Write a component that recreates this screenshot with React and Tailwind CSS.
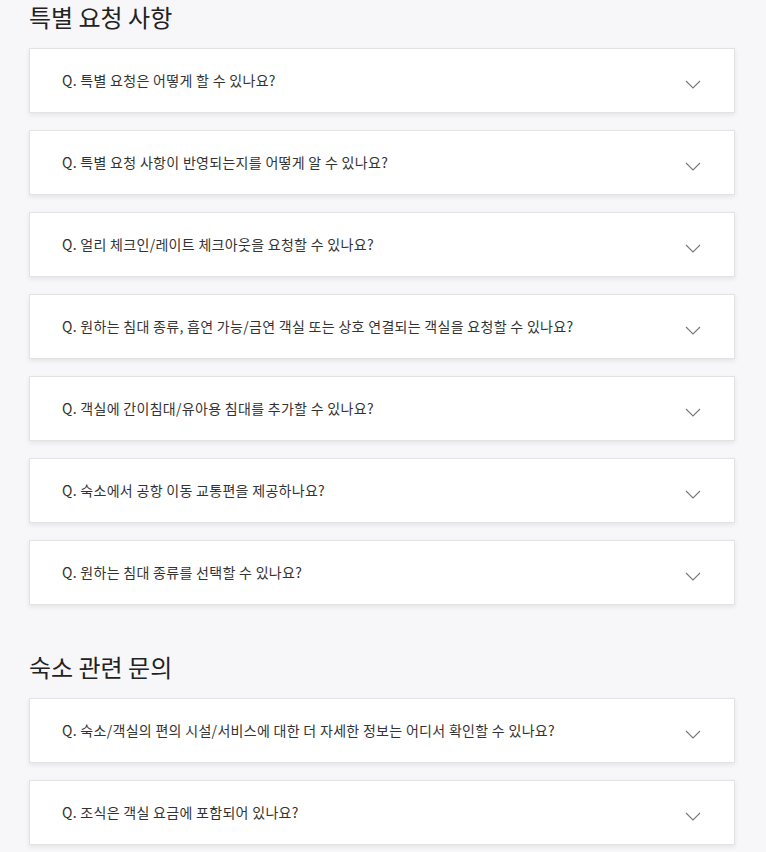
const SECTIONS = [
  {
    title: "특별 요청 사항",
    items: [
      "Q. 특별 요청은 어떻게 할 수 있나요?",
      "Q. 특별 요청 사항이 반영되는지를 어떻게 알 수 있나요?",
      "Q. 얼리 체크인/레이트 체크아웃을 요청할 수 있나요?",
      "Q. 원하는 침대 종류, 흡연 가능/금연 객실 또는 상호 연결되는 객실을 요청할 수 있나요?",
      "Q. 객실에 간이침대/유아용 침대를 추가할 수 있나요?",
      "Q. 숙소에서 공항 이동 교통편을 제공하나요?",
      "Q. 원하는 침대 종류를 선택할 수 있나요?",
    ],
  },
  {
    title: "숙소 관련 문의",
    items: [
      "Q. 숙소/객실의 편의 시설/서비스에 대한 더 자세한 정보는 어디서 확인할 수 있나요?",
      "Q. 조식은 객실 요금에 포함되어 있나요?",
    ],
  },
];

function Chevron() {
  return (
    <svg width="16" height="9" viewBox="0 0 16 9" fill="none" className="shrink-0">
      <path d="M1 1 L8 8 L15 1" stroke="#777" strokeWidth="1.1" />
    </svg>
  );
}

function FaqCard({ text }) {
  return (
    <div className="flex h-[65px] items-center justify-between border border-[#e3e3e6] bg-white pl-[32px] pr-[33px] shadow-[0_2px_5px_rgba(0,0,0,0.08)]">
      <span className="text-[14px] tracking-[0.3px] text-[#333]">{text}</span>
      <div className="pt-[8px]">
        <Chevron />
      </div>
    </div>
  );
}

export default function App() {
  return (
    <div className="min-h-[852px] bg-[#f7f7f9] pl-[29px] pr-[31px] font-['Noto_Sans_CJK_KR','Noto_Sans',sans-serif]">
      {SECTIONS.map((section, i) => (
        <section key={section.title} className={i > 0 ? "mt-[45px]" : ""}>
          <h2 className="pb-[14px] text-[24px] leading-[34px] text-[#222]">{section.title}</h2>
          <div className="flex flex-col gap-[17px]">
            {section.items.map((q) => (
              <FaqCard key={q} text={q} />
            ))}
          </div>
        </section>
      ))}
    </div>
  );
}
